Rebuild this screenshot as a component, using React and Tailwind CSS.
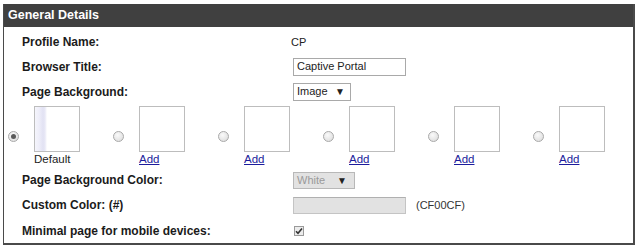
import React from "react";

const Radio = ({ checked }) => (
  <span className="relative flex h-[11px] w-[11px] shrink-0 items-center justify-center rounded-full border border-[#a9a9a9] bg-[radial-gradient(circle_at_40%_35%,#fafafa,#d9d9d9)]">
    {checked && <span className="h-[5px] w-[5px] rounded-full bg-[#5a5a5a]" />}
  </span>
);

const Thumb = ({ checked, label, link }) => (
  <div className="flex w-[105px] shrink-0 items-center">
    <Radio checked={checked} />
    <div className="ml-[15px] flex flex-col">
      {checked ? (
        <div className="h-[46px] w-[46px] border border-[#bdbdbd] bg-[linear-gradient(to_right,#f5f5fc_0px,#eeeef9_4px,#e2e2f3_8px,#e8e8f6_10px,#ffffff_12px)]" />
      ) : (
        <div className="h-[46px] w-[46px] border border-[#bdbdbd] bg-white" />
      )}
      <div className="h-[14px] text-[11.5px] leading-[14px]">
        {link ? (
          <a href="#" className="text-[#1c1c9c] underline">{label}</a>
        ) : (
          <span className="text-[#222]">{label}</span>
        )}
      </div>
    </div>
  </div>
);

const Row = ({ label, h, children }) => (
  <div className={`flex items-center pl-[18px] ${h}`}>
    <div className="w-[271px] shrink-0 text-[12px] font-bold text-[#1b1b1b]">{label}</div>
    <div className="flex items-center">{children}</div>
  </div>
);

export default function App() {
  return (
    <div className="bg-white pl-[3px] pt-[4px]" style={{ fontFamily: '"Liberation Sans", Arial, sans-serif' }}>
      <div className="w-[632px] border-b-2 border-l border-r-2 border-[#4a4a4a] bg-white">
        <div className="flex h-[23px] items-center bg-[#404040] pl-[4px] text-[12.5px] font-bold text-white">
          General Details
        </div>
        <div className="flex flex-col pt-[3px]">
          <Row label="Profile Name:" h="h-[24px]">
            <span className="-ml-[2px] text-[11px] text-[#222]">CP</span>
          </Row>
          <Row label="Browser Title:" h="h-[25px]">
            <div className="flex h-[18px] w-[113px] items-center border border-[#a9a9a9] bg-white pl-[3px] text-[11px] text-[#222]">
              Captive Portal
            </div>
          </Row>
          <Row label="Page Background:" h="h-[25px]">
            <div className="flex h-[18px] w-[58px] items-center justify-between border border-[#a9a9a9] bg-white pl-[3px] pr-[5px] text-[11px] text-[#222]">
              <span>Image</span>
              <span className="text-[10px]">▼</span>
            </div>
          </Row>
          <div className="mt-[2px] flex pl-[4px]">
            <Thumb checked label="Default" />
            <Thumb label="Add" link />
            <Thumb label="Add" link />
            <Thumb label="Add" link />
            <Thumb label="Add" link />
            <Thumb label="Add" link />
          </div>
          <div className="mt-[2px]">
            <Row label="Page Background Color:" h="h-[24px]">
              <div className="flex h-[17px] w-[62px] items-center justify-between border border-[#b8b8b8] bg-[#e2e2e2] pl-[3px] pr-[7px] text-[11px] text-[#9a9a9a]">
                <span>White</span>
                <span className="text-[10px] text-[#222]">▼</span>
              </div>
            </Row>
          </div>
          <Row label="Custom Color: (#)" h="h-[26px]">
            <div className="h-[17px] w-[113px] border border-[#c4c4c4] border-t-[#b0b0b0] bg-[#e2e2e2]" />
            <span className="ml-[10px] text-[11px] text-[#333]">(CF00CF)</span>
          </Row>
          <Row label="Minimal page for mobile devices:" h="h-[25px]">
            <span className="ml-[1px] flex h-[10px] w-[10px] items-center justify-center border border-[#9a9a9a] bg-[#ececec]">
              <svg width="8" height="8" viewBox="0 0 8 8">
                <path d="M1 4.2 L3 6.3 L7 1.5" fill="none" stroke="#333" strokeWidth="1.6" />
              </svg>
            </span>
          </Row>
        </div>
      </div>
    </div>
  );
}
